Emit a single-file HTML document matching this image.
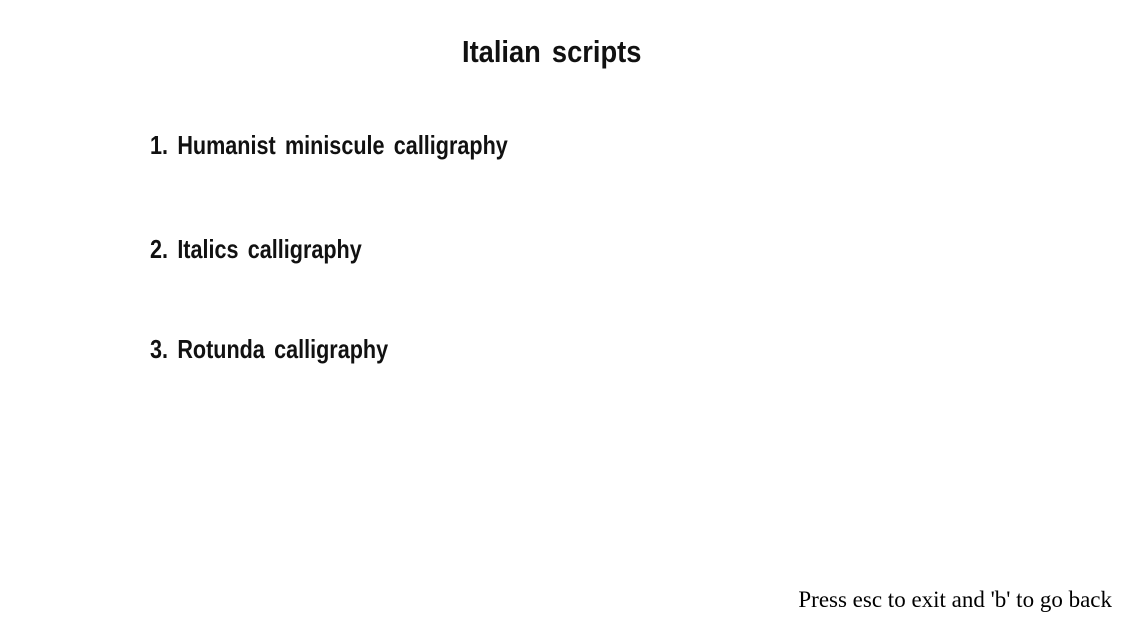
<!DOCTYPE html>
<html><head><meta charset="utf-8"><style>
html,body{margin:0;padding:0;width:1125px;height:625px;background:#fff;overflow:hidden;position:relative}
.t{position:absolute;font-family:"Liberation Sans",sans-serif;font-weight:bold;color:#111;white-space:nowrap;word-spacing:4px}
#title{left:462px;top:34px;font-size:31px;transform:scaleX(0.88);transform-origin:left top}
.i{left:150px;font-size:26px;transform:scaleX(0.83);transform-origin:left top}
#f{position:absolute;right:13px;top:587px;font-family:"Liberation Serif",serif;font-size:23px;color:#000;white-space:nowrap}
</style></head><body>
<div class="t" id="title">Italian scripts</div>
<div class="t i" style="top:130px">1. Humanist miniscule calligraphy</div>
<div class="t i" style="top:234px">2. Italics calligraphy</div>
<div class="t i" style="top:334px">3. Rotunda calligraphy</div>
<div id="f">Press esc to exit and 'b' to go back</div>
</body></html>
